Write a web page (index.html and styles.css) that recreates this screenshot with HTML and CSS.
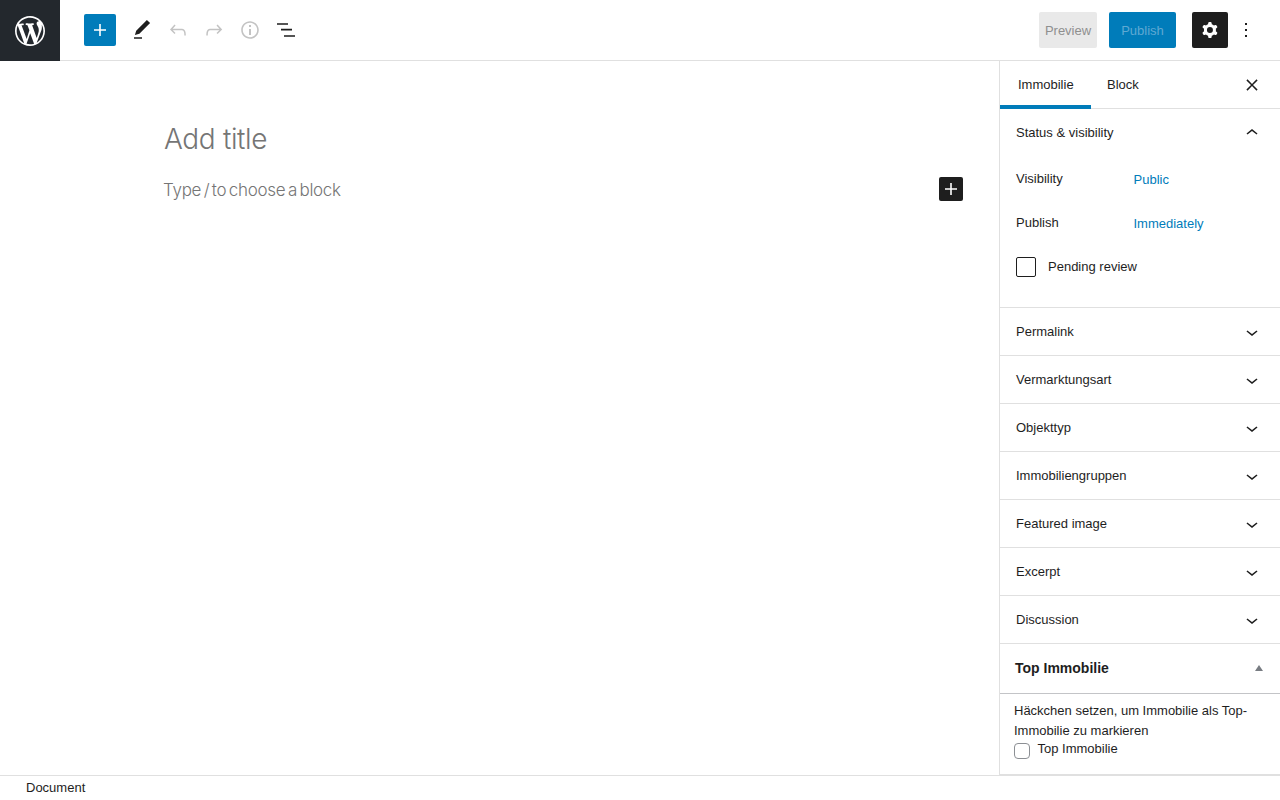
FILE: index.html
```html
<!DOCTYPE html>
<html lang="en">
<head>
<meta charset="utf-8">
<title>Add title</title>
<link rel="stylesheet" href="styles.css">
</head>
<body>
<div class="app">
  <header class="topbar">
    <a class="wp-logo"><svg width="36" height="36" viewBox="-2 -2 24 24"><path fill="#fff" d="M20 10c0-5.51-4.49-10-10-10C4.48 0 0 4.49 0 10c0 5.52 4.48 10 10 10 5.51 0 10-4.48 10-10zM7.78 15.37L4.37 6.22c.55-.02 1.17-.08 1.17-.08.5-.06.44-1.13-.06-1.11 0 0-1.45.11-2.37.11-.18 0-.37 0-.58-.01C4.12 2.69 6.87 1.11 10 1.11c2.33 0 4.45.87 6.05 2.34-.68-.11-1.65.39-1.65 1.58 0 .74.45 1.36.9 2.1.35.61.55 1.36.55 2.46 0 1.49-1.4 5-1.4 5l-3.03-8.37c.54-.02.82-.17.82-.17.5-.05.44-1.25-.06-1.22 0 0-1.44.12-2.38.12-.87 0-2.33-.12-2.33-.12-.5-.03-.56 1.2-.06 1.22l.92.08 1.26 3.41zM17.41 10c.24-.64.74-1.87.43-4.25.7 1.29 1.05 2.71 1.05 4.25 0 3.29-1.73 6.24-4.4 7.78.97-2.59 1.94-5.2 2.92-7.78zM6.1 18.09C3.12 16.65 1.11 13.53 1.11 10c0-1.3.23-2.48.72-3.59C3.25 10.3 4.67 14.2 6.1 18.09zm4.03-6.63l2.58 6.98c-.86.29-1.76.45-2.71.45-.79 0-1.57-.11-2.29-.33.81-2.38 1.62-4.74 2.42-7.1z"/></svg></a>
    <div class="tools">
      <span class="add-btn"><svg width="24" height="24" viewBox="0 0 24 24"><path fill="#fff" d="M18 11.2h-5.2V6h-1.6v5.2H6v1.6h5.2V18h1.6v-5.2H18z"/></svg></span>
      <span class="tool"><svg width="24" height="24" viewBox="0 0 24 24"><path fill="#1e1e1e" d="M20.1 5.1L16.9 2 6.2 12.7l-1.3 4.4 4.5-1.3L20.1 5.1zM4 20.8h8v-1.5H4v1.5z"/></svg></span>
      <span class="tool"><svg width="24" height="24" viewBox="0 0 24 24"><path fill="#c3c3c3" d="M18.3 11.7c-.6-.6-1.4-.9-2.3-.9H6.7l2.9-3.3-1.1-1-4.5 5L8.5 16l1-1-2.7-2.7H16c.5 0 .9.2 1.3.5 1 1 1 3.4 1 4.5v.3h1.5v-.2c0-1.5 0-4.3-1.5-5.7z"/></svg></span>
      <span class="tool"><svg width="24" height="24" viewBox="0 0 24 24"><path fill="#c3c3c3" d="M15.6 6.5l-1.1 1 2.9 3.3H8c-.9 0-1.7.3-2.3.9-1.4 1.5-1.4 4.2-1.4 5.6v.2h1.5v-.3c0-1.1 0-3.5 1-4.5.3-.3.7-.5 1.3-.5h9.2L14.5 15l1.1 1.1 4.6-4.6-4.6-5z"/></svg></span>
      <span class="tool"><svg width="24" height="24" viewBox="0 0 24 24"><path fill="#c3c3c3" d="M12 3.2c-4.8 0-8.8 3.9-8.8 8.8 0 4.8 3.9 8.8 8.8 8.8 4.8 0 8.8-3.9 8.8-8.8 0-4.8-4-8.8-8.8-8.8zm0 16c-4 0-7.2-3.3-7.2-7.2C4.8 8 8 4.8 12 4.8s7.2 3.3 7.2 7.2c0 4-3.2 7.2-7.2 7.2zM11 17h2v-6h-2v6zm0-8h2V7h-2v2z"/></svg></span>
      <span class="tool"><svg width="24" height="24" viewBox="0 0 24 24"><path fill="#1e1e1e" d="M3 5.2h11v1.6H3zM7 10.8h11v1.6H7zM10 17.2h11v1.6H10z"/></svg></span>
    </div>
    <div class="actions">
      <span class="btn-preview">Preview</span>
      <span class="btn-publish">Publish</span>
      <span class="btn-settings"><svg width="24" height="24" viewBox="0 0 24 24"><path fill="#fff" fill-rule="evenodd" clip-rule="evenodd" d="M10.289 4.836A1 1 0 0111.275 4h1.306a1 1 0 01.987.836l.244 1.466c.787.26 1.503.679 2.108 1.218l1.393-.522a1 1 0 011.216.437l.653 1.13a1 1 0 01-.23 1.273l-1.148.944a6.025 6.025 0 010 2.435l1.149.946a1 1 0 01.23 1.272l-.653 1.13a1 1 0 01-1.216.437l-1.394-.522c-.605.54-1.32.958-2.108 1.218l-.244 1.466a1 1 0 01-.987.836h-1.306a1 1 0 01-.986-.836l-.244-1.466a5.995 5.995 0 01-2.108-1.218l-1.394.522a1 1 0 01-1.217-.436l-.653-1.131a1 1 0 01.23-1.272l1.149-.946a6.026 6.026 0 010-2.435l-1.148-.944a1 1 0 01-.23-1.272l.653-1.131a1 1 0 011.217-.437l1.393.522a5.994 5.994 0 012.108-1.218l.244-1.466zM14.929 12a3 3 0 11-6 0 3 3 0 016 0z"/></svg></span>
      <span class="btn-more"><svg width="24" height="24" viewBox="0 0 24 24"><path fill="#1e1e1e" d="M13 19h-2v-2h2v2zm0-6h-2v-2h2v2zm0-6h-2V5h2v2z"/></svg></span>
    </div>
  </header>

  <div class="body">
    <main class="canvas">
      <h1 class="title">Add title</h1>
      <div class="block-row">
        <p class="placeholder">Type / to choose a block</p>
        <span class="block-add"><svg width="24" height="24" viewBox="0 0 24 24"><path fill="#fff" d="M18 11.2h-5.2V6h-1.6v5.2H6v1.6h5.2V18h1.6v-5.2H18z"/></svg></span>
      </div>
    </main>

    <aside class="sidebar">
      <div class="side-tabs">
        <span class="tab tab-active">Immobilie</span>
        <span class="tab">Block</span>
        <span class="side-close"><svg width="24" height="24" viewBox="0 0 24 24"><path fill="#1e1e1e" d="M13 12l4.6-4.6-1.1-1.1-4.5 4.6-4.5-4.6-1.1 1.1L11 12l-4.6 4.6 1.1 1.1 4.5-4.6 4.5 4.6 1.1-1.1z"/></svg></span>
      </div>

      <section class="panel panel-open">
        <div class="panel-head"><span>Status &amp; visibility</span><svg class="chev" width="24" height="24" viewBox="0 0 24 24"><path fill="#1e1e1e" d="M6.5 12.4L12 8l5.5 4.4-.9 1.2L12 10l-4.5 3.6-1-1.2z"/></svg></div>
        <div class="status-body">
          <div class="status-row status-first"><span class="status-label">Visibility</span><a class="status-link">Public</a></div>
          <div class="status-row"><span class="status-label">Publish</span><a class="status-link">Immediately</a></div>
          <label class="pending"><input class="pending-box" type="checkbox"><span class="pending-text">Pending review</span></label>
        </div>
      </section>

      <section class="panel"><div class="panel-head"><span>Permalink</span><svg class="chev" width="24" height="24" viewBox="0 0 24 24"><path fill="#1e1e1e" d="M17.5 11.6L12 16l-5.5-4.4.9-1.2L12 14l4.5-3.6 1 1.2z"/></svg></div></section>
      <section class="panel"><div class="panel-head"><span>Vermarktungsart</span><svg class="chev" width="24" height="24" viewBox="0 0 24 24"><path fill="#1e1e1e" d="M17.5 11.6L12 16l-5.5-4.4.9-1.2L12 14l4.5-3.6 1 1.2z"/></svg></div></section>
      <section class="panel"><div class="panel-head"><span>Objekttyp</span><svg class="chev" width="24" height="24" viewBox="0 0 24 24"><path fill="#1e1e1e" d="M17.5 11.6L12 16l-5.5-4.4.9-1.2L12 14l4.5-3.6 1 1.2z"/></svg></div></section>
      <section class="panel"><div class="panel-head"><span>Immobiliengruppen</span><svg class="chev" width="24" height="24" viewBox="0 0 24 24"><path fill="#1e1e1e" d="M17.5 11.6L12 16l-5.5-4.4.9-1.2L12 14l4.5-3.6 1 1.2z"/></svg></div></section>
      <section class="panel"><div class="panel-head"><span>Featured image</span><svg class="chev" width="24" height="24" viewBox="0 0 24 24"><path fill="#1e1e1e" d="M17.5 11.6L12 16l-5.5-4.4.9-1.2L12 14l4.5-3.6 1 1.2z"/></svg></div></section>
      <section class="panel"><div class="panel-head"><span>Excerpt</span><svg class="chev" width="24" height="24" viewBox="0 0 24 24"><path fill="#1e1e1e" d="M17.5 11.6L12 16l-5.5-4.4.9-1.2L12 14l4.5-3.6 1 1.2z"/></svg></div></section>
      <section class="panel"><div class="panel-head"><span>Discussion</span><svg class="chev" width="24" height="24" viewBox="0 0 24 24"><path fill="#1e1e1e" d="M17.5 11.6L12 16l-5.5-4.4.9-1.2L12 14l4.5-3.6 1 1.2z"/></svg></div></section>

      <section class="metabox">
        <div class="metabox-head"><span>Top Immobilie</span><i class="metabox-arrow"></i></div>
        <div class="metabox-body">
          <p class="metabox-text">Häckchen setzen, um Immobilie als Top-Immobilie zu markieren</p>
          <label class="metabox-check"><input class="metabox-box" type="checkbox"><span class="metabox-label">Top Immobilie</span></label>
        </div>
      </section>
    </aside>
  </div>

  <footer class="footer">Document</footer>
</div>
</body>
</html>
```
FILE: styles.css
```css
* { box-sizing: border-box; }
html, body { margin: 0; padding: 0; height: 100%; overflow: hidden; }
body { background: #fff; color: #1e1e1e; font-family: "Liberation Sans", Arial, sans-serif; font-size: 13px; }
.app { display: flex; flex-direction: column; height: 800px; }

.topbar { display: flex; align-items: center; height: 61px; flex: none; border-bottom: 1px solid #e0e0e0; }
.wp-logo { width: 60px; height: 61px; margin-bottom: -1px; background: #23282d; display: flex; align-items: center; justify-content: center; flex: none; }
.tools { display: flex; align-items: center; margin-left: 24px; gap: 12px; height: 60px; }
.add-btn { width: 32px; height: 32px; background: #007cba; border-radius: 2px; display: flex; align-items: center; justify-content: center; margin-right: 2px; }
.tool { width: 24px; height: 24px; display: block; }
.tool svg, .btn-more svg, .side-close svg, .block-add svg, .btn-settings svg, .add-btn svg { display: block; }
.actions { display: flex; align-items: center; margin-left: auto; height: 60px; padding-right: 22px; }
.btn-preview { width: 58px; height: 36px; background: #e9e9e9; color: #8f8f8f; border-radius: 2px; display: flex; align-items: center; justify-content: center; }
.btn-publish { width: 67px; height: 36px; margin-left: 12px; background: #007cba; color: #5fa9d3; border-radius: 2px; display: flex; align-items: center; justify-content: center; }
.btn-settings { width: 36px; height: 36px; margin-left: 16px; background: #1e1e1e; border-radius: 2px; display: flex; align-items: center; justify-content: center; }
.btn-more { width: 24px; height: 24px; margin-left: 6px; }

.body { display: flex; flex: 1; min-height: 0; }
.canvas { flex: 1; min-width: 0; padding-top: 59px; padding-left: 163px; padding-right: 36px; }
.title { margin: 0 0 0 1px; font-family: Inter, "Liberation Sans", sans-serif; font-weight: 300; font-size: 28px; line-height: 38px; color: #757575; letter-spacing: -0.35px; }
.block-row { display: flex; align-items: center; justify-content: space-between; margin-top: 19px; height: 24px; }
.placeholder { margin: 1px 0 0 0; font-family: Inter, "Liberation Sans", sans-serif; font-weight: 300; font-size: 17px; color: #757575; word-spacing: -2px; letter-spacing: -0.28px; }
.block-add { width: 24px; height: 24px; background: #1e1e1e; border-radius: 2px; display: block; }

.sidebar { width: 281px; flex: none; border-left: 1px solid #e0e0e0; overflow: hidden; }
.side-tabs { display: flex; align-items: center; height: 48px; border-bottom: 1px solid #e0e0e0; position: relative; }
.tab { height: 48px; display: flex; align-items: center; padding: 0 16px; margin-top: -1px; }
.tab-active { width: 91px; padding: 4px 0 0 18px; border-bottom: 4px solid #007cba; margin-bottom: -1px; }
.side-close { margin-left: auto; margin-right: 16px; width: 24px; height: 24px; }

.panel { border-bottom: 1px solid #e0e0e0; }
.panel-head { height: 47px; display: flex; align-items: center; justify-content: space-between; padding: 0 16px; }
.chev { display: block; flex: none; margin-top: 1px; }
.panel-open .panel-head { height: 48px; padding-bottom: 2px; }
.status-body { height: 144px; padding: 0 16px; }
.panel-open .status-body { height: 144px; }
.status-row { display: flex; align-items: flex-start; height: 44px; }
.status-first { margin-top: 6px; }
.status-label { width: 117.5px; flex: none; padding-top: 8px; }
.status-link { color: #007cba; padding-top: 9px; }
.pending { display: flex; align-items: center; gap: 12px; margin-top: 6px; height: 20px; }
.pending-text { padding-bottom: 2px; }
.pending-box { appearance: none; margin: 0; width: 20px; height: 20px; border: 1px solid #1e1e1e; border-radius: 2px; background: #fff; flex: none; }

.metabox-head { height: 50px; display: flex; align-items: center; justify-content: space-between; padding: 0 17px 2px 15px; border-bottom: 1px solid #c3c4c7; font-size: 14px; font-weight: 700; }
.metabox-arrow { width: 0; height: 0; border-left: 4px solid transparent; border-right: 4px solid transparent; border-bottom: 6px solid #787c82; display: block; }
.metabox-body { height: 81px; padding: 7px 14px 0; border-bottom: 1px solid #e0e0e0; }
.metabox-text { margin: 0; line-height: 20px; }
.metabox-check { display: flex; align-items: flex-start; gap: 7.5px; }
.metabox-box { appearance: none; margin: 2px 0 0; width: 16px; height: 16px; border: 1px solid #8c8f94; border-radius: 4px; background: #fff; flex: none; }
.metabox-label { padding-top: 0; }

.footer { height: 25px; flex: none; border-top: 1px solid #e0e0e0; padding-left: 26px; line-height: 24px; background: #fff; }
```
